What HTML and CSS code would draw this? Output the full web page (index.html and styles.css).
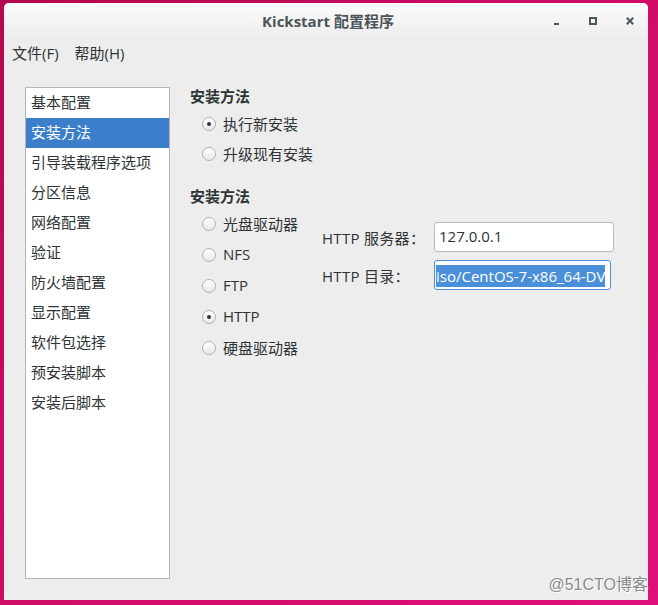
FILE: index.html
```html
<!DOCTYPE html>
<html lang="zh-CN">
<head>
<meta charset="utf-8">
<title>Kickstart 配置程序</title>
<link rel="stylesheet" href="styles.css">
</head>
<body>
<div class="window">
  <div class="titlebar">
    <div></div>
    <div class="title">Kickstart 配置程序</div>
    <div class="controls">
      <svg class="ctl" width="16" height="16" viewBox="0 0 16 16"><rect x="6" y="10" width="5" height="2" fill="#4b565c"/></svg>
      <svg class="ctl" width="16" height="16" viewBox="0 0 16 16"><rect x="5" y="5" width="6" height="6" fill="none" stroke="#4b565c" stroke-width="2"/></svg>
      <svg class="ctl" width="16" height="16" viewBox="0 0 16 16"><path d="M5.5 5.5 L10.5 10.5 M10.5 5.5 L5.5 10.5" stroke="#4b565c" stroke-width="2" stroke-linecap="square"/></svg>
    </div>
  </div>
  <div class="menubar">
    <span class="menu">文件(F)</span>
    <span class="menu">帮助(H)</span>
  </div>
  <div class="content">
    <ul class="nav">
      <li>基本配置</li>
      <li class="active">安装方法</li>
      <li>引导装载程序选项</li>
      <li>分区信息</li>
      <li>网络配置</li>
      <li>验证</li>
      <li>防火墙配置</li>
      <li>显示配置</li>
      <li>软件包选择</li>
      <li>预安装脚本</li>
      <li>安装后脚本</li>
    </ul>
    <div class="panel">
      <div class="heading">安装方法</div>
      <div class="radios first">
        <div class="radio checked"><span class="dot"></span>执行新安装</div>
        <div class="radio"><span class="dot"></span>升级现有安装</div>
      </div>
      <div class="heading second">安装方法</div>
      <div class="split">
        <div class="radios tall">
          <div class="radio"><span class="dot"></span>光盘驱动器</div>
          <div class="radio"><span class="dot"></span>NFS</div>
          <div class="radio"><span class="dot"></span>FTP</div>
          <div class="radio checked"><span class="dot"></span>HTTP</div>
          <div class="radio"><span class="dot"></span>硬盘驱动器</div>
        </div>
        <div class="form">
          <div class="row">
            <span class="label">HTTP 服务器：</span>
            <div class="input">127.0.0.1</div>
          </div>
          <div class="row">
            <span class="label">HTTP 目录：</span>
            <div class="input focus"><span class="sel">iso/CentOS-7-x86_64-DV</span></div>
          </div>
        </div>
      </div>
    </div>
  </div>
</div>
<div class="watermark">@51CTO博客</div>
</body>
</html>
```
FILE: styles.css
```css
html, body {
  margin: 0;
  padding: 0;
}
body {
  width: 658px;
  height: 605px;
  overflow: hidden;
  background: linear-gradient(135deg, #b3084f 0%, #cc0a63 40%, #e0107a 100%);
  font-family: "Open Sans", "Noto Sans CJK SC", sans-serif;
  font-size: 15px;
  color: #2e3436;
  position: relative;
}
.window {
  margin: 3px 0 0 4px;
  width: 644px;
  height: 597px;
  background: #ededed;
  border-radius: 5px 5px 0 0;
  display: flex;
  flex-direction: column;
}
.titlebar {
  height: 35px;
  flex: none;
  display: grid;
  grid-template-columns: 1fr auto 1fr;
  align-items: center;
  background: linear-gradient(#fbfbfb, #ededed);
  border-radius: 5px 5px 0 0;
}
.title {
  font-weight: bold;
  color: #4a5459;
  font-size: 15px;
  padding-left: 4px;
  padding-bottom: 1px;
}
.controls {
  justify-self: end;
  display: flex;
  gap: 21px;
  padding-right: 10px;
}
.ctl {
  display: block;
}
.menubar {
  height: 32px;
  flex: none;
  display: flex;
  align-items: center;
  gap: 16px;
  padding-left: 8px;
}
.menu {
  line-height: 20px;
  padding-bottom: 2px;
}
.content {
  flex: 1;
  display: flex;
  padding: 17px 0 0 21px;
  gap: 20px;
}
.nav {
  list-style: none;
  margin: 0;
  padding: 0;
  width: 143px;
  height: 490px;
  border: 1px solid #b6b6b6;
  background: #fff;
}
.nav li {
  height: 30px;
  line-height: 28px;
  padding-left: 5px;
  padding-bottom: 2px;
  box-sizing: border-box;
}
.nav li.active {
  background: #3b7fcb;
  color: #fff;
}
.panel {
  display: flex;
  flex-direction: column;
}
.heading {
  font-weight: bold;
  line-height: 18px;
  margin-bottom: 4px;
}
.heading.second {
  margin-top: 18px;
  margin-bottom: 3px;
}
.radios {
  display: flex;
  flex-direction: column;
  width: 132px;
}
.radio {
  display: flex;
  align-items: center;
  height: 30px;
  box-sizing: border-box;
  padding-left: 12px;
  padding-bottom: 1px;
  gap: 7px;
}
.radios.tall .radio {
  height: 31px;
}
.dot {
  width: 12px;
  height: 12px;
  border: 1px solid #b0b0b0;
  border-radius: 50%;
  background: linear-gradient(#ffffff, #e8e8e8);
  position: relative;
  flex: none;
  margin-top: 1px;
}
.radio.checked .dot::after {
  content: "";
  position: absolute;
  left: 4px;
  top: 4px;
  width: 4px;
  height: 4px;
  border-radius: 50%;
  background: #2e3436;
}
.split {
  display: flex;
}
.form {
  margin-top: 14px;
  display: flex;
  flex-direction: column;
  gap: 8px;
}
.row {
  display: flex;
  align-items: center;
}
.label {
  width: 112px;
  letter-spacing: 0.3px;
}
.input {
  width: 172px;
  height: 28px;
  line-height: 26px;
  border: 1px solid #b9b9b9;
  border-radius: 3px;
  background: #fff;
  padding-left: 4px;
  padding-right: 2px;
  overflow: hidden;
  white-space: nowrap;
}
.input.focus {
  border-color: #4a90d9;
  padding-left: 1px;
}
.sel {
  background: #4a90d9;
  color: #fff;
  display: inline-block;
  line-height: 22px;
  vertical-align: middle;
}
.watermark {
  position: absolute;
  right: 10px;
  bottom: 10px;
  color: #8a8a8a;
  font-family: "Liberation Sans", "Noto Sans CJK SC", sans-serif;
  font-size: 16px;
  text-shadow: 1px 1px 0 #fff;
}
```
